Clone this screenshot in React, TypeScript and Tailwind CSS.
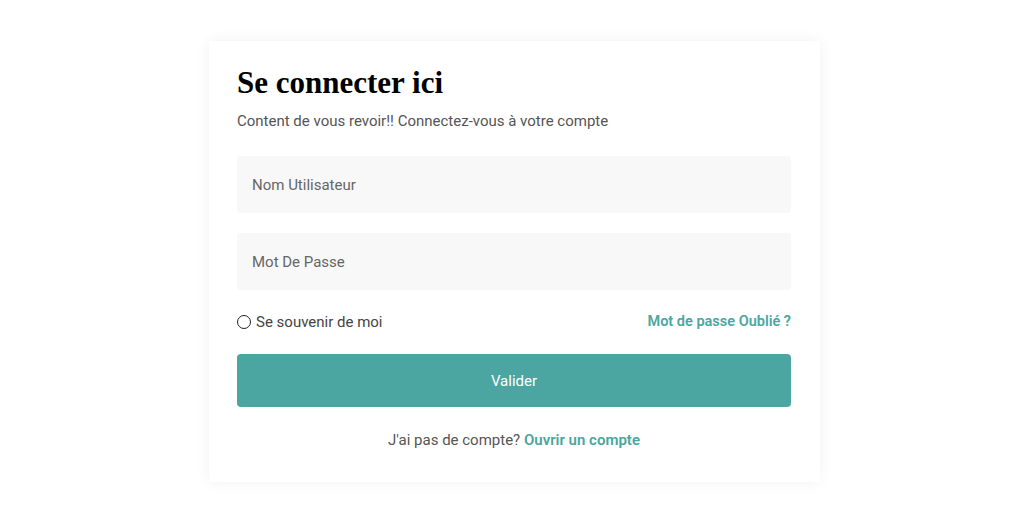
export default function App() {
  return (
    <div className="w-[1024px] h-[512px] bg-white flex justify-center pt-[41px] pl-[5px]" style={{ fontFamily: 'Roboto, "Liberation Sans", sans-serif' }}>
      <div className="w-[611px] h-[441px] bg-white shadow-[0_0_14px_rgba(0,0,0,0.06)] pl-[28px] pr-[29px] pt-[24px]">
        <h1 className="text-[31px] leading-[36px] font-bold text-black" style={{ fontFamily: '"Liberation Serif", serif' }}>
          Se connecter ici
        </h1>
        <p className="mt-[10px] text-[15px] leading-[20px] text-[#555]">
          Content de vous revoir!! Connectez-vous à votre compte
        </p>
        <input
          className="mt-[25px] block w-full h-[57px] bg-[#f8f8f8] rounded-[3px] px-[15px] text-[15px] text-[#555] placeholder:text-[#666] outline-none"
          placeholder="Nom Utilisateur"
        />
        <input
          type="password"
          className="mt-[20px] block w-full h-[57px] bg-[#f8f8f8] rounded-[3px] px-[15px] text-[15px] text-[#555] placeholder:text-[#666] outline-none"
          placeholder="Mot De Passe"
        />
        <div className="mt-[22px] flex items-center justify-between h-[20px]">
          <label className="flex items-center gap-[5px] text-[15px] text-[#444]">
            <span className="w-[14px] h-[14px] rounded-full border border-[#222] inline-block" />
            Se souvenir de moi
          </label>
          <a className="text-[14.5px] font-semibold text-[#4aa6a1]">Mot de passe Oublié ?</a>
        </div>
        <button className="mt-[22px] w-full h-[53px] bg-[#4ba5a1] rounded-[4px] text-white text-[15px] pt-[2px]">
          Valider
        </button>
        <p className="mt-[23px] text-center text-[15px] leading-[20px] text-[#555]">
          J'ai pas de compte? <a className="font-semibold text-[#4aa6a1]">Ouvrir un compte</a>
        </p>
      </div>
    </div>
  );
}
